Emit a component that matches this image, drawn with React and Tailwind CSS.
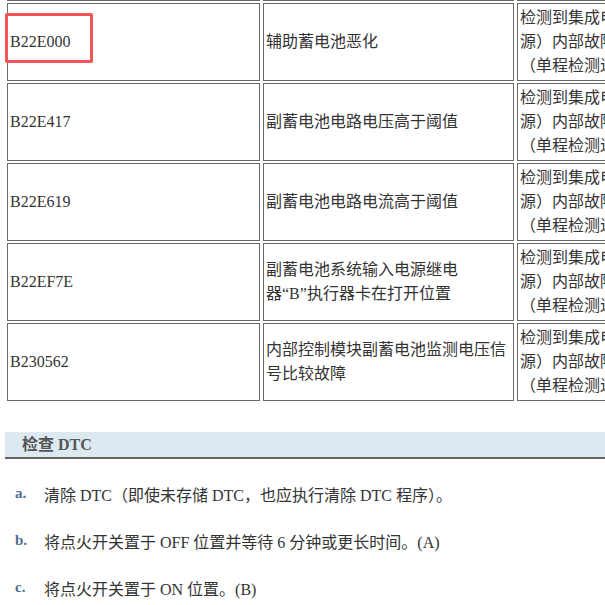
const ROWS = [
  { code: 'B22E000', name: ['辅助蓄电池恶化'] },
  { code: 'B22E417', name: ['副蓄电池电路电压高于阈值'] },
  { code: 'B22E619', name: ['副蓄电池电路电流高于阈值'] },
  { code: 'B22EF7E', name: ['副蓄电池系统输入电源继电', '器“B”执行器卡在打开位置'] },
  { code: 'B230562', name: ['内部控制模块副蓄电池监测电压信', '号比较故障'] },
];

const DETAIL = ['检测到集成电源模块（辅助蓄电池电', '源）内部故障。', '（单程检测逻辑）'];

const STEPS = [
  { key: 'a.', text: '清除 DTC（即使未存储 DTC，也应执行清除 DTC 程序）。' },
  { key: 'b.', text: '将点火开关置于 OFF 位置并等待 6 分钟或更长时间。(A)' },
  { key: 'c.', text: '将点火开关置于 ON 位置。(B)' },
];

const cell = 'border border-[#6b6b6b] flex items-center px-[2px] py-[2px] leading-6';

export default function App() {
  return (
    <div
      className="relative w-[605px] h-[605px] overflow-hidden bg-white text-[#333] text-[16px]"
      style={{ fontFamily: '"Liberation Serif", "Noto Sans CJK SC", serif' }}
    >
      {/* DTC table, scrolled so the previous row is just off the top */}
      <div className="ml-[7px] -mt-[77px] grid grid-cols-[253px_251px_320px] gap-x-[3px] gap-y-[2px] w-[830px]">
        <div className={`${cell} h-[78px]`} />
        <div className={`${cell} h-[78px]`} />
        <div className={`${cell} h-[78px]`} />
        {ROWS.map(r => (
          <div key={r.code} className="contents">
            <div className={`${cell} h-[78px]`}>{r.code}</div>
            <div className={`${cell} h-[78px]`}>
              <div>
                {r.name.map(l => <div key={l}>{l}</div>)}
              </div>
            </div>
            <div className={`${cell} h-[78px] whitespace-nowrap`}>
              <div>
                {DETAIL.map(l => <div key={l}>{l}</div>)}
              </div>
            </div>
          </div>
        ))}
      </div>

      {/* highlight annotation */}
      <div className="absolute left-[5px] top-[13px] w-[88px] h-[50px] border-[3px] border-[#f25555] rounded-[2px]" />

      {/* Check DTC */}
      <div className="mt-[31px] ml-[5px] h-[27px] bg-[#dde9f0] border-b-2 border-[#666] pl-[17px] flex items-center font-bold text-[#555]">
        检查 DTC
      </div>

      <div className="mt-[25px] flex flex-col gap-[23px]">
        {STEPS.map(s => (
          <div key={s.key} className="flex items-start leading-6">
            <span className="w-[44px] pl-[15px] -mt-[3px] font-bold text-[15px] text-[#4f6f8f]">{s.key}</span>
            <span>{s.text}</span>
          </div>
        ))}
      </div>
    </div>
  );
}
